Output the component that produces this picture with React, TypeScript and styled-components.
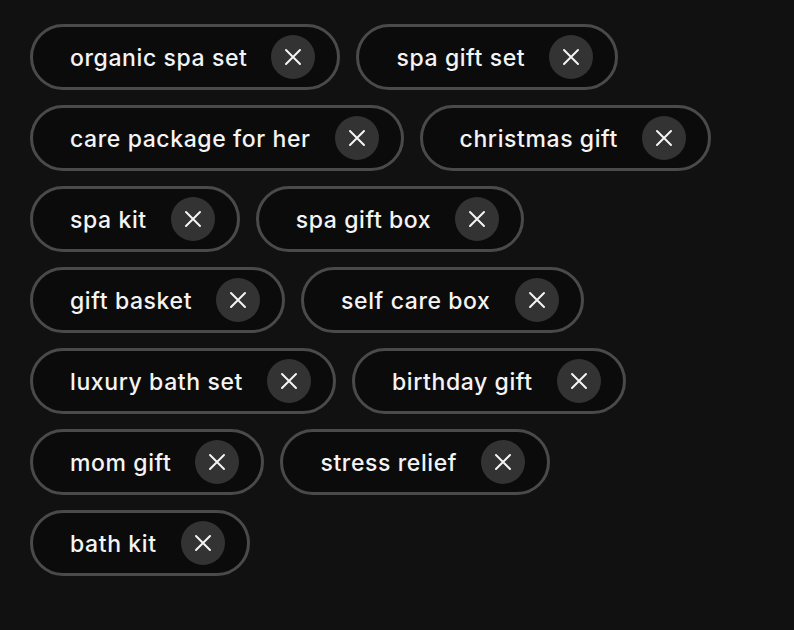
import React from 'react';
import styled, { createGlobalStyle } from 'styled-components';

const GlobalStyle = createGlobalStyle`
    html, body {
        margin: 0;
        padding: 0;
        background-color: #111111;
    }
    body {
        font-family: Inter, "Noto Sans", "Liberation Sans", sans-serif;
    }
`;

const Page = styled.div`
    min-height: 630px;
    width: 794px;
    box-sizing: border-box;
    padding: 24px 30px;
    background-color: #111111;
`;

const ChipList = styled.div`
    display: flex;
    flex-wrap: wrap;
    align-content: flex-start;
    column-gap: 16px;
    row-gap: 15px;
`;

const Chip = styled.div`
    display: flex;
    align-items: center;
    gap: 24px;
    height: 66px;
    box-sizing: border-box;
    padding: 0 22px 0 37px;
    border: 3px solid #4a4a4a;
    border-radius: 33px;
    background-color: #0b0b0b;
`;

const Label = styled.span`
    padding-top: 2px;
    color: #f4f4f4;
    font-size: 23px;
    font-weight: 500;
    letter-spacing: 0.6px;
    white-space: nowrap;
`;

const RemoveButton = styled.button`
    display: flex;
    align-items: center;
    justify-content: center;
    width: 44px;
    height: 44px;
    flex-shrink: 0;
    padding: 0;
    border: none;
    border-radius: 50%;
    background-color: #333333;
    cursor: pointer;
`;

const CloseIcon = () => (
    <svg width='18' height='18' viewBox='0 0 18 18' fill='none'>
        <path d='M2 2L16 16M16 2L2 16' stroke='#f4f4f4' strokeWidth='2' strokeLinecap='round' />
    </svg>
);

const tags = [
    'organic spa set',
    'spa gift set',
    'care package for her',
    'christmas gift',
    'spa kit',
    'spa gift box',
    'gift basket',
    'self care box',
    'luxury bath set',
    'birthday gift',
    'mom gift',
    'stress relief',
    'bath kit',
];

export default function App() {
    return (
        <>
            <GlobalStyle />
            <Page>
                <ChipList>
                    {tags.map((tag) => (
                        <Chip key={tag}>
                            <Label>{tag}</Label>
                            <RemoveButton aria-label={`remove ${tag}`}>
                                <CloseIcon />
                            </RemoveButton>
                        </Chip>
                    ))}
                </ChipList>
            </Page>
        </>
    );
}
